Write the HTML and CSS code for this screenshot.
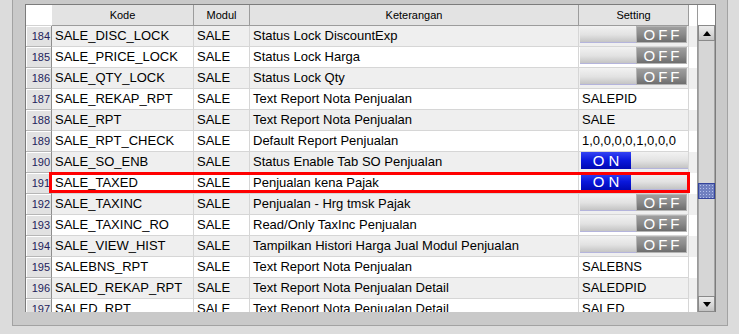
FILE: index.html
```html
<!DOCTYPE html>
<html lang="id">
<head>
  <meta charset="UTF-8">
  <title>Setting Modul</title>
  <link rel="stylesheet" href="styles.css">
</head>
<body>
  <div class="panel">
    <div class="grid">
      <div class="grid-body">
        <div class="row head">
          <div class="cell corner"></div>
          <div class="cell">Kode</div>
          <div class="cell">Modul</div>
          <div class="cell">Keterangan</div>
          <div class="cell">Setting</div>
        </div>
        <div class="row alt">
          <div class="cell num">184</div><div class="cell">SALE_DISC_LOCK</div><div class="cell">SALE</div><div class="cell">Status Lock DiscountExp</div>
          <div class="cell setting"><div class="toggle off"><span class="bar"></span><span class="knob">OFF</span></div></div>
        </div>
        <div class="row">
          <div class="cell num">185</div><div class="cell">SALE_PRICE_LOCK</div><div class="cell">SALE</div><div class="cell">Status Lock Harga</div>
          <div class="cell setting"><div class="toggle off"><span class="bar"></span><span class="knob">OFF</span></div></div>
        </div>
        <div class="row alt">
          <div class="cell num">186</div><div class="cell">SALE_QTY_LOCK</div><div class="cell">SALE</div><div class="cell">Status Lock Qty</div>
          <div class="cell setting"><div class="toggle off"><span class="bar"></span><span class="knob">OFF</span></div></div>
        </div>
        <div class="row">
          <div class="cell num">187</div><div class="cell">SALE_REKAP_RPT</div><div class="cell">SALE</div><div class="cell">Text Report Nota Penjualan</div><div class="cell">SALEPID</div>
        </div>
        <div class="row alt">
          <div class="cell num">188</div><div class="cell">SALE_RPT</div><div class="cell">SALE</div><div class="cell">Text Report Nota Penjualan</div><div class="cell">SALE</div>
        </div>
        <div class="row">
          <div class="cell num">189</div><div class="cell">SALE_RPT_CHECK</div><div class="cell">SALE</div><div class="cell">Default Report Penjualan</div><div class="cell">1,0,0,0,0,1,0,0,0</div>
        </div>
        <div class="row alt">
          <div class="cell num">190</div><div class="cell">SALE_SO_ENB</div><div class="cell">SALE</div><div class="cell">Status Enable Tab SO Penjualan</div>
          <div class="cell setting"><div class="toggle on"><span class="knob">ON</span><span class="bar"></span></div></div>
        </div>
        <div class="row">
          <div class="cell num">191</div><div class="cell">SALE_TAXED</div><div class="cell">SALE</div><div class="cell">Penjualan kena Pajak</div>
          <div class="cell setting"><div class="toggle on"><span class="knob">ON</span><span class="bar"></span></div></div>
        </div>
        <div class="row alt">
          <div class="cell num">192</div><div class="cell">SALE_TAXINC</div><div class="cell">SALE</div><div class="cell">Penjualan - Hrg tmsk Pajak</div>
          <div class="cell setting"><div class="toggle off"><span class="bar"></span><span class="knob">OFF</span></div></div>
        </div>
        <div class="row">
          <div class="cell num">193</div><div class="cell">SALE_TAXINC_RO</div><div class="cell">SALE</div><div class="cell">Read/Only TaxInc Penjualan</div>
          <div class="cell setting"><div class="toggle off"><span class="bar"></span><span class="knob">OFF</span></div></div>
        </div>
        <div class="row alt">
          <div class="cell num">194</div><div class="cell">SALE_VIEW_HIST</div><div class="cell">SALE</div><div class="cell">Tampilkan Histori Harga Jual Modul Penjualan</div>
          <div class="cell setting"><div class="toggle off"><span class="bar"></span><span class="knob">OFF</span></div></div>
        </div>
        <div class="row">
          <div class="cell num">195</div><div class="cell">SALEBNS_RPT</div><div class="cell">SALE</div><div class="cell">Text Report Nota Penjualan</div><div class="cell">SALEBNS</div>
        </div>
        <div class="row alt">
          <div class="cell num">196</div><div class="cell">SALED_REKAP_RPT</div><div class="cell">SALE</div><div class="cell">Text Report Nota Penjualan Detail</div><div class="cell">SALEDPID</div>
        </div>
        <div class="row">
          <div class="cell num">197</div><div class="cell">SALED_RPT</div><div class="cell">SALE</div><div class="cell">Text Report Nota Penjualan Detail</div><div class="cell">SALED</div>
        </div>

        <!-- baris yang dipilih -->
        <div class="highlight"></div>
      </div>

      <div class="scrollbar">
        <div class="scroll-top"></div>
        <div class="scroll-btn"><span class="arrow up"></span></div>
        <div class="scroll-track"><div class="thumb"></div></div>
        <div class="scroll-btn"><span class="arrow down"></span></div>
      </div>
    </div>
  </div>
</body>
</html>
```

FILE: styles.css
```css
body {
  margin: 0;
  background-color: #dcdcdc;
  font-family: "Liberation Sans", Arial, sans-serif;
  color: #000000;
}
.panel {
  box-sizing: border-box;
  width: 716px;
  height: 326px;
  margin-left: 12px;
  padding: 4px 0 0 12px;
  background-color: #c9c9c9;
  border-left: 1px solid #a2a2a2;
  border-right: 1px solid #a2a2a2;
  border-bottom: 1px solid #a2a2a2;
}
.grid {
  box-sizing: border-box;
  display: flex;
  width: 691px;
  height: 308px;
  background-color: #cbcbcb;
  border: 1px solid #7c7c7c;
  border-bottom: none;
  overflow: hidden;
}
.grid-body {
  position: relative;
  width: 672px;
  overflow: hidden;
}
.row {
  display: grid;
  grid-template-columns: 26px 142px 56px 329px 110px;
  height: 21px;
  background-color: #ffffff;
}
.row.alt {
  background-color: #efefef;
}
.cell {
  box-sizing: border-box;
  height: 21px;
  padding-left: 3px;
  border-right: 1px solid #d6d6d6;
  border-bottom: 1px solid #d6d6d6;
  font-size: 13px;
  line-height: 20px;
  white-space: nowrap;
  overflow: hidden;
}
.head .cell {
  padding-left: 0;
  background-color: #e3e3e3;
  border-right-color: #9c9c9c;
  border-bottom-color: #9c9c9c;
  font-size: 11px;
  text-align: center;
}
.head .corner {
  background-color: #ffffff;
  border-right: none;
  border-bottom-color: #d2d2d2;
}
.num {
  padding: 0 1px 0 0;
  background-color: #e2e2e2;
  border-right-color: #8e8e8e;
  border-bottom-color: #b6b6b6;
  box-shadow: inset 1px 1px #ffffff;
  font-size: 11px;
  color: #22225c;
  text-align: right;
}
.setting {
  padding-left: 1px;
}
.toggle {
  display: flex;
  width: 107px;
  height: 17px;
}
.toggle .bar {
  flex: 1;
  background: linear-gradient(#f2f2f2, #e2e2e2 55%, #c4c4c4);
  border-bottom: 1px solid #b4b4dc;
}
.toggle .knob {
  box-sizing: border-box;
  color: #ffffff;
  font-size: 15px;
  line-height: 17px;
  letter-spacing: 3px;
  text-align: center;
}
.toggle.off .knob {
  width: 51px;
  padding-left: 3px;
  background: linear-gradient(#9e9e9e, #8a8a8a 50%, #6e6e6e);
  border: 1px solid #b4b4b4;
  line-height: 15px;
}
.toggle.on {
  padding-left: 1px;
}
.toggle.on .knob {
  width: 50px;
  padding-left: 4px;
  background: linear-gradient(#3444f4, #0a18dc 50%, #0008b4);
  letter-spacing: 4px;
}
.highlight {
  position: absolute;
  left: 23px;
  top: 167px;
  box-sizing: border-box;
  width: 641px;
  height: 21px;
  border: 3px solid #ff0000;
}
.scrollbar {
  display: flex;
  flex-direction: column;
  width: 17px;
  border-left: 1px solid #9a9a9a;
}
.scroll-top {
  height: 20px;
  background-color: #ffffff;
}
.scroll-btn {
  box-sizing: border-box;
  display: flex;
  align-items: center;
  justify-content: center;
  height: 16px;
  background: linear-gradient(#ececec, #d6d6d6 60%, #c2c2c2);
  border: 1px solid #8a8a8a;
}
.arrow {
  width: 0;
  height: 0;
  border-left: 4px solid transparent;
  border-right: 4px solid transparent;
}
.arrow.up {
  border-bottom: 5px solid #000000;
}
.arrow.down {
  border-top: 5px solid #000000;
}
.scroll-track {
  flex: 1;
  background-color: #d6d6d6;
  border-left: 1px solid #a6a6a6;
  border-right: 1px solid #a6a6a6;
}
.thumb {
  box-sizing: border-box;
  height: 16px;
  margin: 142px -1px 0;
  background-color: #7080c0;
  background-image: radial-gradient(#b4c0ec 35%, transparent 40%);
  background-size: 3px 3px;
  border: 1px solid #34449c;
}
```
